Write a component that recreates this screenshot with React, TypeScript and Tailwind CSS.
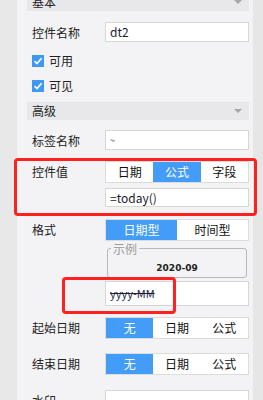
import type { ReactNode } from 'react'

const font = '"Microsoft YaHei", "Noto Sans CJK SC", "Liberation Sans", sans-serif'

function SectionHeader({ title, className = '' }: { title: string; className?: string }) {
  return (
    <div className={`h-5 flex items-center justify-between bg-[#e8e8ea] pl-[5px] pr-[7px] text-[12px] text-[#222] ${className}`}>
      <span>{title}</span>
      <span className="w-0 h-0 border-l-[4px] border-r-[4px] border-t-[4px] border-l-transparent border-r-transparent border-t-[#a6a6a6]" />
    </div>
  )
}

function Row({ label, children, className = '' }: { label?: string; children: ReactNode; className?: string }) {
  return (
    <div className={`flex ${className}`}>
      <div className="w-[78px] shrink-0 pl-[5px] pt-[1px] text-[12px] leading-[20px] text-[#222]">{label}</div>
      <div className="flex-1 flex flex-col">{children}</div>
    </div>
  )
}

function TextBox({ value, className = '', textClass = '' }: { value: string; className?: string; textClass?: string }) {
  return (
    <div className={`bg-white border border-[#d6d6d6] flex items-center pl-[4px] text-[12px] text-[#1b1b2e] ${className}`}>
      <span className={textClass}>{value}</span>
    </div>
  )
}

function Segmented({ items, active, cols }: { items: string[]; active: number; cols: 2 | 3 }) {
  return (
    <div className={`h-[22px] w-[144px] border border-[#dcdcdc] bg-white grid ${cols === 3 ? 'grid-cols-3' : 'grid-cols-2'}`}>
      {items.map((item, i) => (
        <div
          key={item}
          className={`flex items-center justify-center text-[12px] ${i === active ? 'bg-[#439cf7] text-white' : 'text-[#111]'}`}
        >
          {item}
        </div>
      ))}
    </div>
  )
}

function Check({ label }: { label: string }) {
  return (
    <div className="flex items-center gap-[5px] pl-[5px] h-[25px] text-[12px] text-[#222]">
      <span className="w-3 h-3 bg-[#3f98f4] flex items-center justify-center">
        <svg width="10" height="10" viewBox="0 0 10 10">
          <path d="M1.5 5.2 L4 7.6 L8.6 2.2" stroke="white" strokeWidth="1.6" fill="none" />
        </svg>
      </span>
      <span>{label}</span>
    </div>
  )
}

export default function App() {
  return (
    <div className="relative w-[263px] h-[400px] overflow-hidden flex" style={{ fontFamily: font }}>
      <div className="w-[17px] bg-[#e8e8e8]" />
      <div className="flex-1 bg-[#f3f3f5] pl-[10px] pr-[4px] flex flex-col -mt-[7px]">
        <SectionHeader title="基本" />
        <Row label="控件名称" className="mt-[11px]">
          <TextBox value="dt2" className="h-[20px]" />
        </Row>
        <div className="mt-[5px]">
          <Check label="可用" />
          <Check label="可见" />
        </div>
        <SectionHeader title="高级" className="mt-[4px]" />
        <Row label="标签名称" className="mt-[10px]">
          <TextBox value="~" className="h-[20px]" textClass="text-[9px] leading-none" />
        </Row>
        <Row label="控件值" className="mt-[10px]">
          <Segmented items={['日期', '公式', '字段']} active={1} cols={3} />
          <TextBox value="=today()" className="h-[19px] mt-[5px]" />
        </Row>
        <Row label="格式" className="mt-[12px]">
          <Segmented items={['日期型', '时间型']} active={0} cols={2} />
          <fieldset className="mt-[1px] mx-[2px] h-[36px] border border-[#b8b8b8] rounded-[3px] px-[3px] pb-0">
            <legend className="px-[2px] text-[12px] leading-[13px] text-[#9a9a9a]">示例</legend>
            <div className="text-center text-[9px] font-bold text-[#222] mt-[7px]" style={{ fontFamily: '"DejaVu Sans", sans-serif' }}>
              2020-09
            </div>
          </fieldset>
          <TextBox
            value="yyyy-MM"
            className="h-[25px] mt-[3px]"
            textClass="text-[11px] text-[#1a1a44] line-through decoration-[#222]"
          />
        </Row>
        <Row label="起始日期" className="mt-[11px]">
          <Segmented items={['无', '日期', '公式']} active={0} cols={3} />
        </Row>
        <Row label="结束日期" className="mt-[14px]">
          <Segmented items={['无', '日期', '公式']} active={0} cols={3} />
        </Row>
        <Row label="水印" className="mt-[15px]">
          <TextBox value="" className="h-[22px]" />
        </Row>
      </div>
      <div className="w-[10px] bg-[#e6e6e6]" />

      <div className="absolute left-[14px] top-[158px] w-[243px] h-[58px] border-[3px] border-[#ff2020] rounded-[4px]" />
      <div className="absolute left-[62px] top-[277px] w-[114px] h-[37px] border-[3px] border-[#ff2020] rounded-[4px]" />
    </div>
  )
}
